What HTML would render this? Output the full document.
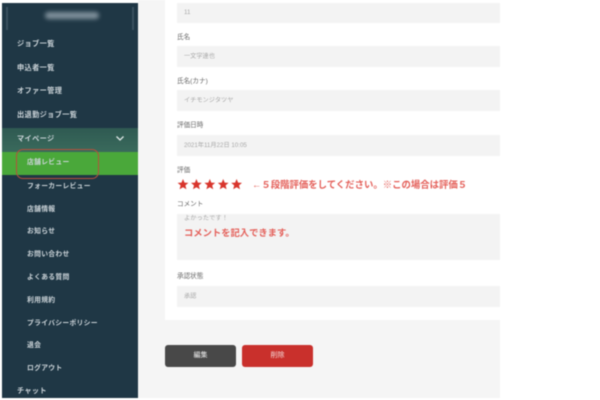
<!DOCTYPE html>
<html lang="ja">
<head>
<meta charset="utf-8">
<style>
html,body{margin:0;padding:0;width:600px;height:400px;overflow:hidden;background:#fff;}
body{position:relative;font-family:"Liberation Sans","Noto Sans CJK JP",sans-serif;}
.a{position:absolute;white-space:nowrap;}
#blurwrap{position:absolute;left:0;top:0;width:600px;height:400px;filter:blur(0.5px);}
.side{position:absolute;left:2px;top:3px;width:136px;height:395px;background:#1f3745;}
.m{position:absolute;color:#ccd4d9;font-size:7.2px;line-height:10px;white-space:nowrap;letter-spacing:.35px;font-weight:700;}
.s{font-size:6.8px;letter-spacing:.3px;}
.l{position:absolute;left:177px;color:#6a6a6a;font-size:6.6px;line-height:10px;white-space:nowrap;}
.f{position:absolute;left:177px;width:323px;background:#f3f3f3;}
.v{position:absolute;left:184px;color:#a8a8a8;font-size:6.2px;line-height:10px;white-space:nowrap;}
.r{position:absolute;color:#e4605a;font-weight:700;white-space:nowrap;}
</style>
</head>
<body>
<div id="blurwrap">
<div class="a" style="left:138px;top:0;width:362px;height:398px;background:#f5f5f5"></div>
<div class="a" style="left:165px;top:0;width:335px;height:320px;background:#fff"></div>

<div class="side"></div>
<div class="a" style="left:6px;top:7px;width:2px;height:23px;background:#3a505e"></div>
<div class="a" style="left:132px;top:7px;width:2px;height:23px;background:#3a505e"></div>
<div class="a" style="left:45px;top:12px;width:54px;height:7px;background:#7f909b;border-radius:4px;filter:blur(2px)"></div>

<div class="m" style="left:17px;top:39px">ジョブ一覧</div>
<div class="m" style="left:17px;top:63px">申込者一覧</div>
<div class="m" style="left:17px;top:86px">オファー管理</div>
<div class="m" style="left:17px;top:110px">出退勤ジョブ一覧</div>

<div class="a" style="left:2px;top:128px;width:136px;height:24px;background:linear-gradient(#2f5a52,#3a6a5c)"></div>
<div class="m" style="left:17px;top:134px">マイページ</div>
<svg class="a" style="left:115px;top:135px" width="10" height="8" viewBox="0 0 10 8"><path d="M1.500 1.500 5 5 8.500 1.500" fill="none" stroke="#dfe7e6" stroke-width="1.300"/></svg>

<div class="a" style="left:2px;top:152px;width:136px;height:23px;background:#4aa83a"></div>
<div class="m s" style="left:27px;top:158px">店舗レビュー</div>
<div class="a" style="left:16px;top:149px;width:81px;height:28px;border:1.500px solid #b6503c;border-radius:7px"></div>

<div class="m s" style="left:27px;top:182px">フォーカーレビュー</div>
<div class="m s" style="left:27px;top:204.500px">店舗情報</div>
<div class="m s" style="left:27px;top:227px">お知らせ</div>
<div class="m s" style="left:27px;top:250px">お問い合わせ</div>
<div class="m s" style="left:27px;top:272.500px">よくある質問</div>
<div class="m s" style="left:27px;top:295.500px">利用規約</div>
<div class="m s" style="left:27px;top:318.500px">プライバシーポリシー</div>
<div class="m s" style="left:27px;top:341px">退会</div>
<div class="m s" style="left:27px;top:363.500px">ログアウト</div>
<div class="m" style="left:17px;top:386px;letter-spacing:.3px">チャット</div>

<div class="f" style="top:3px;height:20px"></div>
<div class="v" style="top:8px">11</div>
<div class="l" style="top:33px">氏名</div>
<div class="f" style="top:46px;height:21px"></div>
<div class="v" style="top:52px">一文字達也</div>
<div class="l" style="top:77px">氏名(カナ)</div>
<div class="f" style="top:90px;height:21px"></div>
<div class="v" style="top:96px">イチモンジタツヤ</div>
<div class="l" style="top:121px">評価日時</div>
<div class="f" style="top:135px;height:21px"></div>
<div class="v" style="top:141px">2021年11月22日 10:05</div>
<div class="l" style="top:166px">評価</div>

<svg class="a" style="left:177px;top:178px" width="66" height="13" viewBox="0 0 66 13">
<g fill="#d8352c">
<path d="M6 1 7.500 4.600 11.400 4.900 8.400 7.400 9.400 11.200 6 9.200 2.600 11.200 3.600 7.400 .6 4.900 4.500 4.600Z"/>
<path transform="translate(13.400 0)" d="M6 1 7.500 4.600 11.400 4.900 8.400 7.400 9.400 11.200 6 9.200 2.600 11.200 3.600 7.400 .6 4.900 4.500 4.600Z"/>
<path transform="translate(26.800 0)" d="M6 1 7.500 4.600 11.400 4.900 8.400 7.400 9.400 11.200 6 9.200 2.600 11.200 3.600 7.400 .6 4.900 4.500 4.600Z"/>
<path transform="translate(40.200 0)" d="M6 1 7.500 4.600 11.400 4.900 8.400 7.400 9.400 11.200 6 9.200 2.600 11.200 3.600 7.400 .6 4.900 4.500 4.600Z"/>
<path transform="translate(53.600 0)" d="M6 1 7.500 4.600 11.400 4.900 8.400 7.400 9.400 11.200 6 9.200 2.600 11.200 3.600 7.400 .6 4.900 4.500 4.600Z"/>
</g>
</svg>
<div class="r" style="left:252px;top:178px;font-size:9.400px;line-height:13px">←５段階評価をしてください。※この場合は評価５</div>

<div class="l" style="top:200px">コメント</div>
<div class="f" style="top:214px;height:46px"></div>
<div class="v" style="top:214px;letter-spacing:.1px">よかったです！</div>
<div class="r" style="left:184px;top:227px;font-size:9.300px;line-height:13px">コメントを記入できます。</div>

<div class="l" style="top:272px">承認状態</div>
<div class="f" style="top:286px;height:21px"></div>
<div class="v" style="top:292px">承認</div>

<div class="a" style="left:165px;top:345px;width:71px;height:22px;background:#484848;border-radius:3px;color:#eee;font-size:7px;line-height:22px;text-align:center">編集</div>
<div class="a" style="left:242px;top:345px;width:71px;height:22px;background:#c9302c;border-radius:3px;color:#f3d6d5;font-size:7px;line-height:22px;text-align:center">削除</div>
</div>
</body>
</html>
